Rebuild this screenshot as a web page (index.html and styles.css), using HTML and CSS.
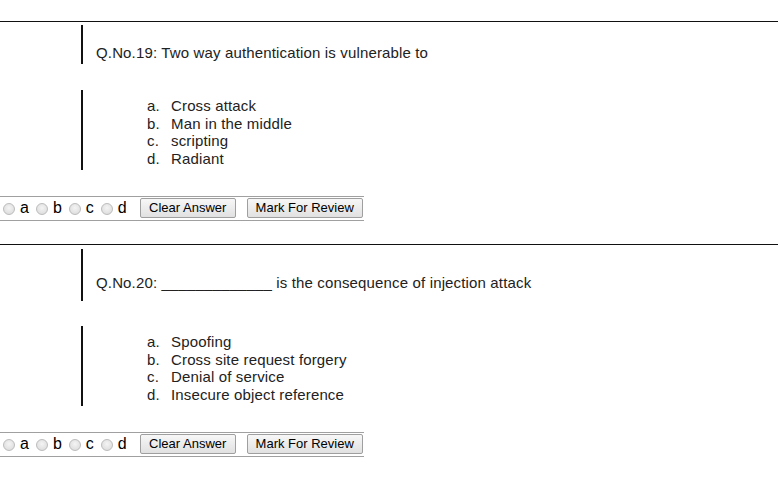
FILE: index.html
```html
<!DOCTYPE html>
<html>
<head>
<meta charset="utf-8">
<link rel="stylesheet" href="styles.css">
</head>
<body>
<div class="page">
  <section class="question">
    <div class="qhead">Q.No.19: Two way authentication is vulnerable to</div>
    <div class="options">
      <div class="opt"><span class="mk">a.</span><span>Cross attack</span></div>
      <div class="opt"><span class="mk">b.</span><span>Man in the middle</span></div>
      <div class="opt"><span class="mk">c.</span><span>scripting</span></div>
      <div class="opt"><span class="mk">d.</span><span>Radiant</span></div>
    </div>
    <div class="answer-row">
      <label class="choice"><input type="radio" name="q19"><span>a</span></label>
      <label class="choice"><input type="radio" name="q19"><span>b</span></label>
      <label class="choice"><input type="radio" name="q19"><span>c</span></label>
      <label class="choice"><input type="radio" name="q19"><span>d</span></label>
      <button class="btn btn-clear">Clear Answer</button>
      <button class="btn btn-mark">Mark For Review</button>
    </div>
  </section>
  <section class="question question-second">
    <div class="qhead qhead-tall">Q.No.20: _____________ is the consequence of injection attack</div>
    <div class="options options-second">
      <div class="opt"><span class="mk">a.</span><span>Spoofing</span></div>
      <div class="opt"><span class="mk">b.</span><span>Cross site request forgery</span></div>
      <div class="opt"><span class="mk">c.</span><span>Denial of service</span></div>
      <div class="opt"><span class="mk">d.</span><span>Insecure object reference</span></div>
    </div>
    <div class="answer-row">
      <label class="choice"><input type="radio" name="q20"><span>a</span></label>
      <label class="choice"><input type="radio" name="q20"><span>b</span></label>
      <label class="choice"><input type="radio" name="q20"><span>c</span></label>
      <label class="choice"><input type="radio" name="q20"><span>d</span></label>
      <button class="btn btn-clear">Clear Answer</button>
      <button class="btn btn-mark">Mark For Review</button>
    </div>
  </section>
</div>
</body>
</html>
```
FILE: styles.css
```css
html, body {
  margin: 0;
  padding: 0;
  background: #ffffff;
}
body {
  font-family: "Liberation Sans", Arial, sans-serif;
  color: #222;
}
.page {
  padding-top: 21px;
}
.question {
  border-top: 1px solid #111;
}
.question-second {
  margin-top: 23px;
}
.qhead {
  margin: 3px 0 0 81px;
  border-left: 2px solid #111;
  padding: 19px 0 3px 13px;
  font-size: 15px;
  line-height: 17px;
  height: 17px;
  white-space: pre;
  letter-spacing: 0.15px;
}
.qhead-tall {
  margin-top: 4px;
  padding-top: 25px;
  padding-bottom: 10px;
}
.options {
  margin: 26px 0 0 81px;
  border-left: 2px solid #111;
  padding: 7px 0 2px 64px;
  font-size: 15px;
  line-height: 17.7px;
  letter-spacing: 0.15px;
}
.options-second {
  margin-top: 25px;
}
.opt {
  display: flex;
}
.mk {
  width: 24px;
}
.answer-row {
  margin-top: 26px;
  width: 364px;
  height: 23px;
  border-top: 1px solid #a0a0a0;
  border-bottom: 1px solid #a0a0a0;
  display: flex;
  align-items: center;
  font-size: 16px;
  color: #000;
  white-space: nowrap;
}
.choice {
  display: flex;
  align-items: center;
  margin-right: 4px;
  flex-shrink: 0;
}
.choice input {
  -webkit-appearance: none;
  appearance: none;
  width: 12px;
  height: 12px;
  margin: 1px 5px 0 3px;
  border: 1px solid #bcbcbc;
  border-radius: 50%;
  background: radial-gradient(circle at 50% 40%, #f4f4f4 0%, #e0e0e0 70%, #d4d4d4 100%);
  box-sizing: border-box;
  flex-shrink: 0;
}
.btn {
  font-family: "Liberation Sans", Arial, sans-serif;
  font-size: 13px;
  color: #000;
  height: 20px;
  padding: 0;
  margin: 0;
  border: 1px solid #9f9f9f;
  border-radius: 2px;
  background: linear-gradient(#f7f7f7, #e1e1e1);
  line-height: 18px;
  white-space: nowrap;
  flex-shrink: 0;
  box-sizing: border-box;
}
.btn-clear {
  margin-left: 9px;
  width: 96px;
}
.btn-mark {
  margin-left: 11px;
  width: 116px;
}
```
